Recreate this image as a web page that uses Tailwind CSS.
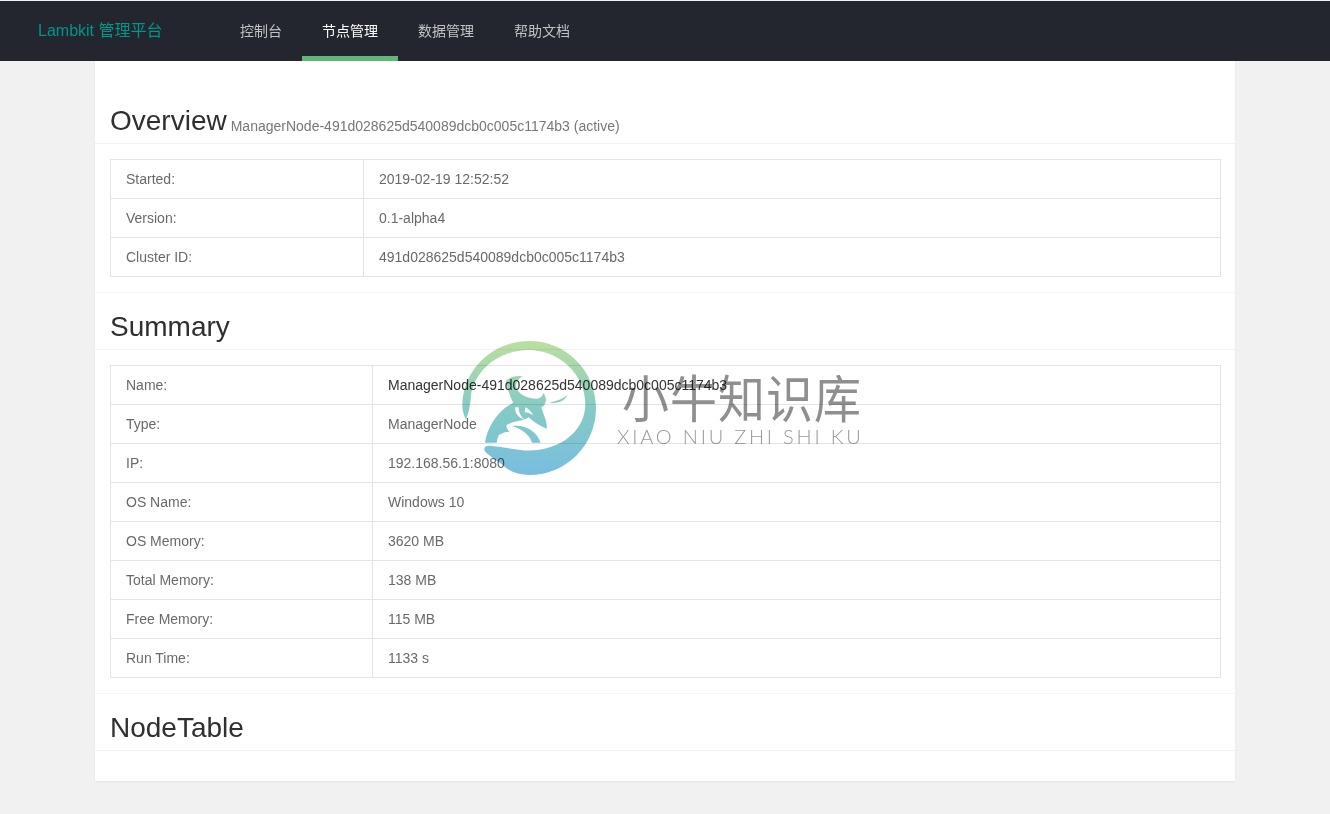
<!DOCTYPE html>
<html>
<head>
<meta charset="utf-8">
<script src="https://cdn.jsdelivr.net/npm/@tailwindcss/browser@4"></script>
</head>
<body class="relative h-[814px] overflow-hidden bg-[#f1f1f1] font-['Liberation_Sans','Noto_Sans_CJK_SC',sans-serif] text-sm text-[#676a6c]">
<header class="mt-px flex h-[60px] items-center bg-[#23262f]">
  <a class="ml-[38px] w-[164px] text-base text-[#009688]">Lambkit 管理平台</a>
  <nav class="flex h-full">
    <a class="flex h-full w-[100px] items-center pl-[38px] text-[#c2c2c2]">控制台</a>
    <a class="flex h-full w-24 items-center justify-center border-b-[5px] border-[#5fb878] pt-[5px] text-white">节点管理</a>
    <a class="flex h-full w-24 items-center justify-center text-[#c2c2c2]">数据管理</a>
    <a class="flex h-full w-24 items-center justify-center text-[#c2c2c2]">帮助文档</a>
  </nav>
</header>
<main class="mx-[95px] h-[720px] bg-white shadow-[0_1px_2px_rgba(0,0,0,0.05)]">
  <section class="h-[232px] border-b border-[#f4f4f4]">
    <h2 class="flex h-[83px] items-end border-b border-[#f2f2f2] px-[15px] pb-[6px] text-[#2f2f2f]">
      <span class="text-[28px] leading-[33px]">Overview</span>
      <small class="mb-px ml-[4px] text-sm leading-5 text-[#777]">ManagerNode-491d028625d540089dcb0c005c1174b3 (active)</small>
    </h2>
    <div class="ml-[15px] mr-[14px] mt-[15px] border border-b-0 border-[#e4e4e4]">
      <div class="flex h-[39px] border-b border-[#e4e4e4]"><div class="flex w-[253px] items-center border-r border-[#e4e4e4] pl-[15px]">Started:</div><div class="flex items-center pl-[15px]">2019-02-19 12:52:52</div></div>
      <div class="flex h-[39px] border-b border-[#e4e4e4]"><div class="flex w-[253px] items-center border-r border-[#e4e4e4] pl-[15px]">Version:</div><div class="flex items-center pl-[15px]">0.1-alpha4</div></div>
      <div class="flex h-[39px] border-b border-[#e4e4e4]"><div class="flex w-[253px] items-center border-r border-[#e4e4e4] pl-[15px]">Cluster ID:</div><div class="flex items-center pl-[15px]">491d028625d540089dcb0c005c1174b3</div></div>
    </div>
  </section>
  <section class="h-[401px] border-b border-[#f4f4f4]">
    <h2 class="flex h-[57px] items-end border-b border-[#f2f2f2] px-[15px] pb-[6px] text-[#2f2f2f]"><span class="text-[28px] leading-[33px]">Summary</span></h2>
    <div class="ml-[15px] mr-[14px] mt-[15px] border border-b-0 border-[#e4e4e4]">
      <div class="flex h-[39px] border-b border-[#e4e4e4]"><div class="flex w-[262px] items-center border-r border-[#e4e4e4] pl-[15px]">Name:</div><div class="flex items-center pl-[15px] text-[#333]">ManagerNode-491d028625d540089dcb0c005c1174b3</div></div>
      <div class="flex h-[39px] border-b border-[#e4e4e4]"><div class="flex w-[262px] items-center border-r border-[#e4e4e4] pl-[15px]">Type:</div><div class="flex items-center pl-[15px]">ManagerNode</div></div>
      <div class="flex h-[39px] border-b border-[#e4e4e4]"><div class="flex w-[262px] items-center border-r border-[#e4e4e4] pl-[15px]">IP:</div><div class="flex items-center pl-[15px]">192.168.56.1:8080</div></div>
      <div class="flex h-[39px] border-b border-[#e4e4e4]"><div class="flex w-[262px] items-center border-r border-[#e4e4e4] pl-[15px]">OS Name:</div><div class="flex items-center pl-[15px]">Windows 10</div></div>
      <div class="flex h-[39px] border-b border-[#e4e4e4]"><div class="flex w-[262px] items-center border-r border-[#e4e4e4] pl-[15px]">OS Memory:</div><div class="flex items-center pl-[15px]">3620 MB</div></div>
      <div class="flex h-[39px] border-b border-[#e4e4e4]"><div class="flex w-[262px] items-center border-r border-[#e4e4e4] pl-[15px]">Total Memory:</div><div class="flex items-center pl-[15px]">138 MB</div></div>
      <div class="flex h-[39px] border-b border-[#e4e4e4]"><div class="flex w-[262px] items-center border-r border-[#e4e4e4] pl-[15px]">Free Memory:</div><div class="flex items-center pl-[15px]">115 MB</div></div>
      <div class="flex h-[39px] border-b border-[#e4e4e4]"><div class="flex w-[262px] items-center border-r border-[#e4e4e4] pl-[15px]">Run Time:</div><div class="flex items-center pl-[15px]">1133 s</div></div>
    </div>
  </section>
  <section>
    <h2 class="flex h-[57px] items-end border-b border-[#f2f2f2] px-[15px] pb-[6px] text-[#2f2f2f]"><span class="text-[28px] leading-[33px]">NodeTable</span></h2>
  </section>
</main>
<div class="pointer-events-none absolute left-[450px] top-[330px] h-[155px] w-[420px]">
  <svg class="absolute left-0 top-0 mix-blend-multiply" width="170" height="155" viewBox="0 0 510 465">
    <defs><linearGradient id="g" x1="0" y1="33" x2="0" y2="435" gradientUnits="userSpaceOnUse"><stop offset="0" stop-color="#bcdf9f"/><stop offset="0.5" stop-color="#85cbc4"/><stop offset="1" stop-color="#79bde0"/></linearGradient></defs>
    <path fill="url(#g)" d="M48,268 C41,255 37,240 37,228 C37,120 127,33 238,33 C349,33 438,123 438,234 C438,345 349,435 238,435 C205,435 178,425 158,405 C140,390 118,380 104,362 C100,352 108,346 125,348 C170,351 215,366 262,360 C345,350 406,295 406,222 C406,135 330,60 235,60 C145,60 66,125 62,208 C60,228 56,250 48,268 Z"/>
    <path fill="url(#g)" fill-rule="evenodd" d="M105,338 C112,290 145,240 190,218 C178,198 172,172 168,152 C182,140 198,136 219,139 C200,148 194,165 202,180 C212,196 240,208 262,206 C272,205 278,198 280,189 C292,205 290,224 274,232 C280,255 293,275 290,296 C268,288 250,275 236,262 C225,270 205,272 188,277 C165,284 145,305 140,338 Z M196,232 C194,246 202,262 222,268 C212,258 205,245 206,232 Z M226,232 C236,236 244,246 250,256 C240,250 232,247 224,246 Z"/>
    <path fill="url(#g)" d="M168,284 C156,290 148,302 148,316 C156,308 168,304 178,307 C172,298 170,292 168,284 Z M186,288 C225,283 260,303 272,338 L246,338 C240,318 222,300 186,288 Z"/>
    <path fill="url(#g)" d="M298,218 C318,215 335,208 352,196 C345,212 325,222 298,218 Z"/>
  </svg>
  <div class="absolute left-[172px] top-[34px] origin-top scale-y-[1.08] whitespace-nowrap font-['Noto_Sans_CJK_SC',sans-serif] text-[47px] font-normal leading-[60px] tracking-[1px] text-[#8f8f8f] mix-blend-multiply">小牛知识库</div>
  <div class="absolute left-[167px] top-[96px] whitespace-nowrap font-['Lato',sans-serif] text-[20px] font-light leading-5 tracking-[2.8px] text-[#999] mix-blend-multiply">XIAO NIU ZHI SHI KU</div>
</div>
</body>
</html>
